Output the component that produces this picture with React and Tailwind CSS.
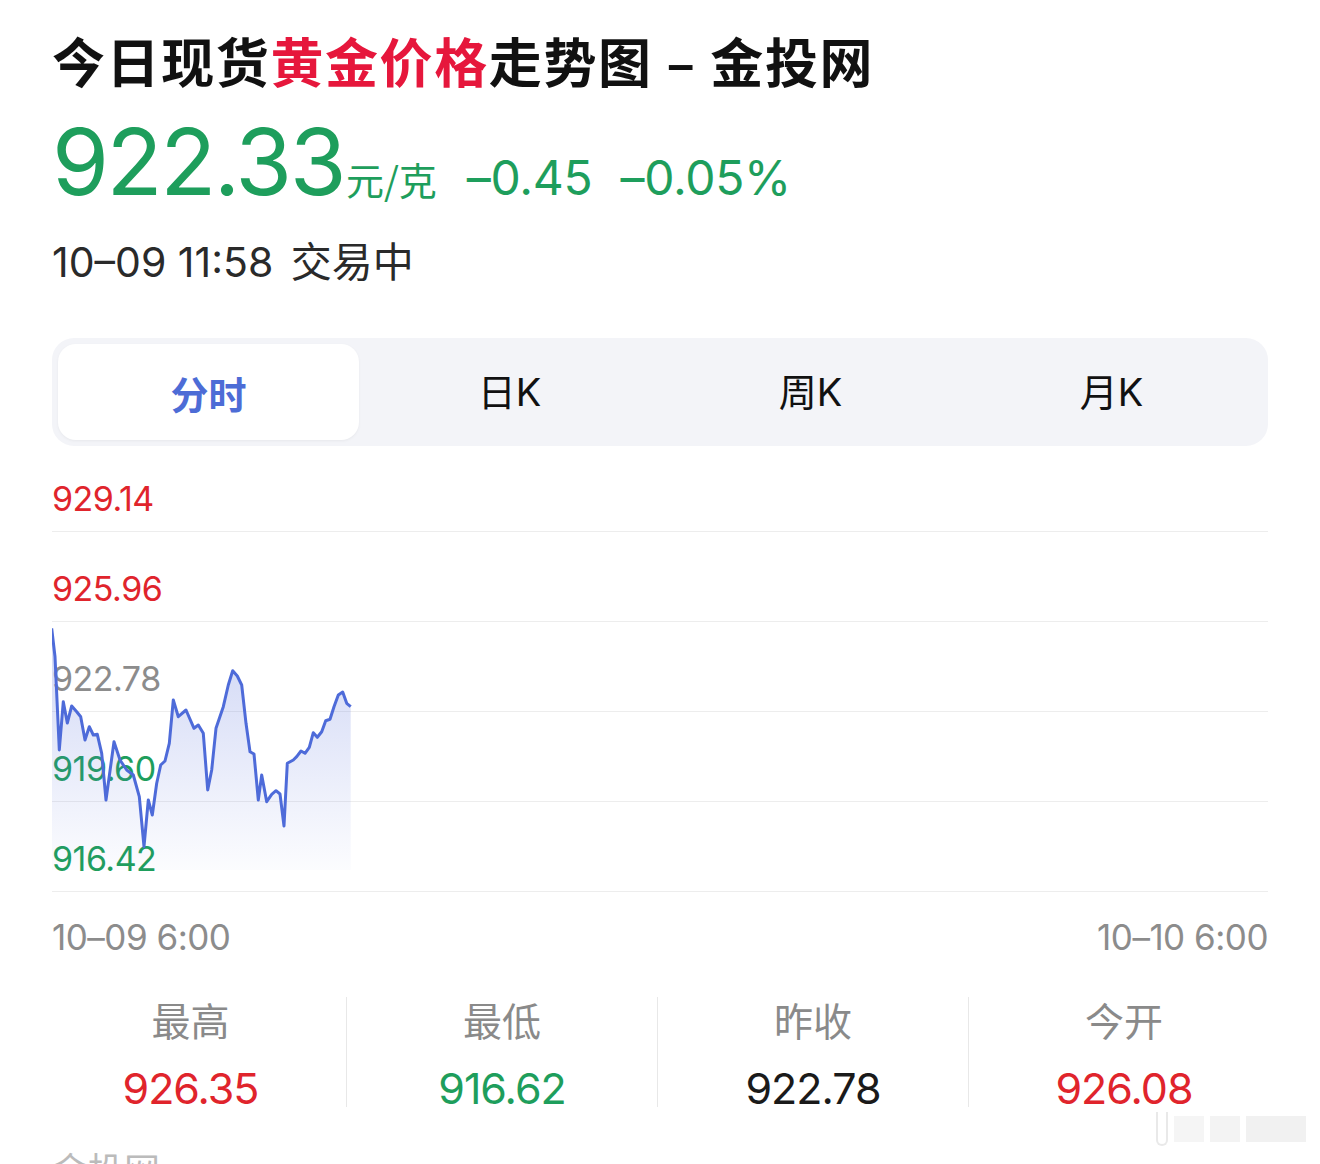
import React from "react";

const pts = [
  [51.7,628.3],[55,656.7],[59.3,750],[63.3,701.7],[67.3,723],[71.7,706],[76.7,711.7],[80.7,716.7],[85,740],[89.3,726.7],[93.3,735],[97.3,734.3],[101.7,753.3],[106,800],[114,741.7],[120,760],[126.7,770],[133.3,775],[139.3,796.7],[144,846.7],[148.3,800],[152.3,815],[156.7,783.3],[160.7,765],[165,761],[169.3,743.3],[173.3,700],[178.3,716.7],[186,710],[194,728.3],[198.3,725],[203.3,733.3],[207.7,790],[211.7,770],[216,728.3],[223.3,706.7],[228.3,685],[232.7,670.7],[237.3,676],[241.7,685],[246,723.3],[250,751.7],[254,754],[258.3,800],[261.7,775],[266.7,801.7],[271.7,794.3],[276,790.7],[280,794],[284,826],[287.3,763.3],[293.3,760],[296.7,756.7],[301,751],[305,753.3],[309.3,747.3],[313.3,732.7],[317.3,737.3],[321.7,731.7],[325.7,720.7],[330,719.3],[334,706.7],[338.3,695],[342.7,692],[346.7,703.3],[350.7,706.7]
];

const line = pts.map((p, i) => (i ? "L" : "M") + p[0] + " " + p[1]).join(" ");
const area = line + " L350.7 870 L51.7 870 Z";

const FONT = { fontFamily: 'Inter, "Noto Sans CJK SC", sans-serif' };
const CJK = { fontFamily: '"Noto Sans CJK SC", sans-serif' };

const rows = [
  { v: "929.14", c: "text-[#e0242c]" },
  { v: "925.96", c: "text-[#e0242c]" },
  { v: "922.78", c: "text-[#8c8c8c]" },
  { v: "919.60", c: "text-[#1e9e5c]" },
  { v: "916.42", c: "text-[#1e9e5c]" },
];

const stats = [
  { l: "最高", v: "926.35", c: "text-[#e0242c]" },
  { l: "最低", v: "916.62", c: "text-[#1e9e5c]" },
  { l: "昨收", v: "922.78", c: "text-[#1a1a1a]" },
  { l: "今开", v: "926.08", c: "text-[#e0242c]" },
];

export default function App() {
  return (
    <div className="w-[1320px] h-[1164px] overflow-hidden bg-white relative" style={FONT}>
      <div className="px-[52px]">
        <div className="pt-[28px] text-[53px] leading-[64px] font-bold text-[#111] tracking-[1.6px]" style={CJK}>
          今日现货<span className="text-[#e6173c]">黄金价格</span>走势图 – 金投网
        </div>

        <div className="flex items-baseline mt-[30px] text-[#1e9e5c] h-[80px]">
          <span className="text-[92px] leading-[80px] tracking-[-2.5px]">922.33</span>
          <span className="text-[38px] ml-[2px]" style={CJK}>元/克</span>
          <span className="text-[48px] ml-[30px] tracking-[-0.3px]">–0.45</span>
          <span className="text-[48px] ml-[28px] tracking-[-0.3px]">–0.05%</span>
        </div>

        <div className="mt-[36px] text-[41px] leading-[48px] text-[#2a2a2a] tracking-[0px]">
          10–09 11:58 <span className="tracking-normal ml-[6px]">交易中</span>
        </div>

        <div className="mt-[52px] h-[108px] bg-[#f3f4f8] rounded-[22px] p-[6px] grid grid-cols-4">
          <div className="bg-white rounded-[18px] flex items-center justify-center text-[38px] font-bold text-[#4d6cd6] shadow-[0_1px_3px_rgba(0,0,0,0.05)]" style={CJK}>
            分时
          </div>
          <div className="flex items-center justify-center text-[38px] text-[#111]">日K</div>
          <div className="flex items-center justify-center text-[38px] text-[#111]">周K</div>
          <div className="flex items-center justify-center text-[38px] text-[#111]">月K</div>
        </div>

        <div className="relative mt-[-4px]">
          {rows.map((r) => (
            <div key={r.v} className="h-[90px] border-b border-[#ededed] flex items-end pb-[12px]">
              <span className={"text-[34px] leading-[40px] tracking-[-0.5px] " + r.c}>{r.v}</span>
            </div>
          ))}
          <svg className="absolute left-0 top-0" width="1216" height="450" viewBox="52 442 1216 450">
            <defs>
              <linearGradient id="g" x1="0" y1="620" x2="0" y2="870" gradientUnits="userSpaceOnUse">
                <stop offset="0" stopColor="#5b73dc" stopOpacity="0.3" />
                <stop offset="1" stopColor="#5b73dc" stopOpacity="0.02" />
              </linearGradient>
            </defs>
            <path d={area} fill="url(#g)" />
            <path d={line} fill="none" stroke="#4e6bd9" strokeWidth="3" strokeLinejoin="round" />
          </svg>
        </div>

        <div className="flex justify-between mt-[25px] text-[35px] leading-[40px] text-[#8c8c8c] tracking-[-0.5px]">
          <span>10–09 6:00</span>
          <span>10–10 6:00</span>
        </div>
      </div>

      <div className="flex ml-[35px] mt-[40px] w-[1244px]">
        {stats.map((s, i) => (
          <div key={s.l} className={"w-[311px] h-[110px] flex flex-col items-center justify-between " + (i ? "border-l border-[#e8e8e8]" : "")}>
            <span className="text-[39px] leading-[44px] text-[#8a8a8a]" style={CJK}>{s.l}</span>
            <span className={"text-[43px] leading-[44px] tracking-[-1px] mb-[-3px] " + s.c}>{s.v}</span>
          </div>
        ))}
      </div>

      <div className="absolute left-[52px] top-[1146px] text-[36px] leading-[44px] text-[#bbbbbb]" style={CJK}>金投网</div>
      <div className="absolute right-[14px] top-[1112px] flex items-center gap-[6px] opacity-60">
        <div className="w-[12px] h-[34px] rounded-b-[6px] border-2 border-[#dcdcdc] border-t-0" />
        <div className="w-[30px] h-[26px] bg-[#f0f0f0]" />
        <div className="w-[30px] h-[26px] bg-[#ececec]" />
        <div className="w-[60px] h-[26px] bg-[#e8e8e8]" />
      </div>
    </div>
  );
}
